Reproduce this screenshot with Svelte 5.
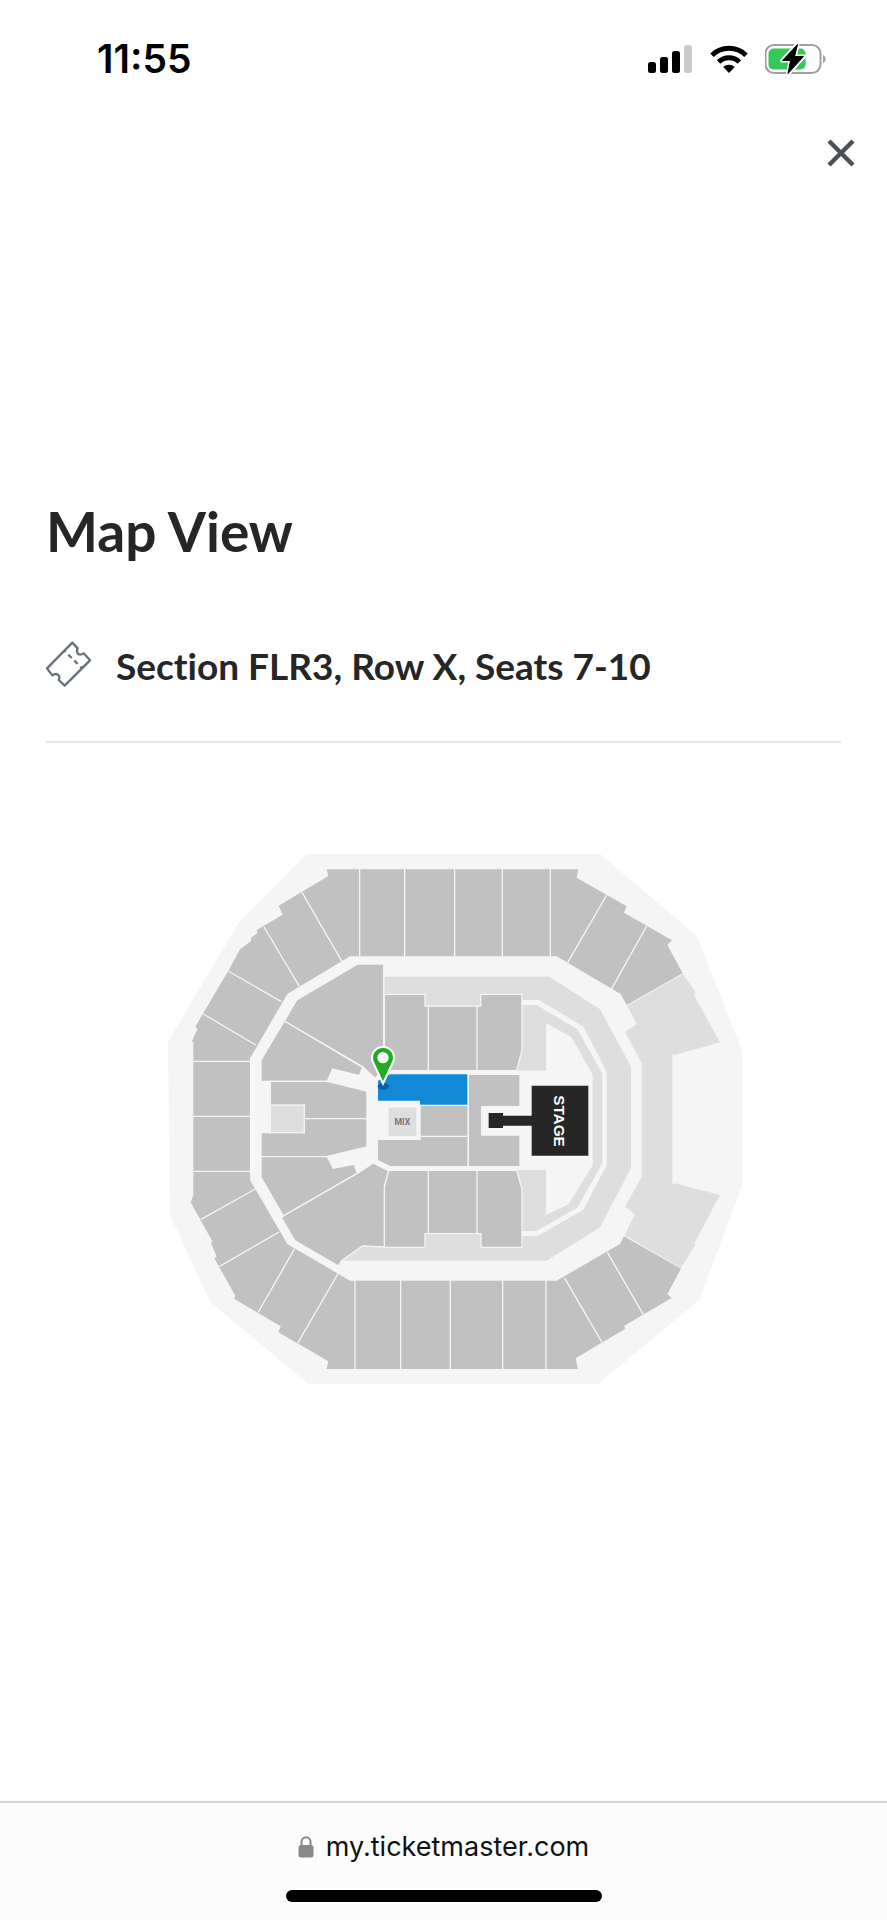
<script>
  const seat = { section: 'FLR3', row: 'X', seats: '7-10' };

  // Straight lines that part the blocks of the outer ring
  const ringDividers =
    'M599 70V337M734 70V337M884 70V337M1027 70V337M1171 70V337' +
    'M585 1304V1575M722 1304V1575M871 1304V1575M1028 1304V1575M1158 1304V1575' +
    'M426 142L546 350M312 246L418 424M204 378L364 470M130 507L287 600' +
    'M96 649H272M96 814H272M96 979H272' +
    'M286 1032L123 1123M357 1161L179 1264M404 1211L295 1401M534 1286L413 1495' +
    'M1340 150L1223 353M1460 243L1354 433M1213 1298L1326 1492M1342 1222L1450 1409';
</script>

<div class="screen">
  <header class="status">
    <time class="clock">11:55</time>
    <div class="indicators">
      <svg width="45" height="30" viewBox="0 0 45 30" aria-hidden="true">
        <rect x="0" y="18" width="8" height="11" rx="2.5" />
        <rect x="12" y="13" width="8" height="16" rx="2.5" />
        <rect x="24" y="7" width="8" height="22" rx="2.5" />
        <rect x="36" y="1" width="8" height="28" rx="2.5" fill="#cbcbcb" />
      </svg>
      <svg width="38" height="30" viewBox="0 0 38 30" aria-hidden="true">
        <g fill="none" stroke="#000" stroke-width="5">
          <path d="M2 11.2a24.5 24.5 0 0 1 34 0" />
          <path d="M8.6 18a15 15 0 0 1 20.8 0" />
        </g>
        <path d="M13.2 23a8.4 8.4 0 0 1 11.6 0L19 29z" />
      </svg>
      <svg width="64" height="32" viewBox="1 0 64 32" aria-hidden="true">
        <rect x="1.5" y="2" width="55" height="28" rx="8.5" fill="none" stroke="#a0a0a0" stroke-width="2" />
        <path d="M59.500 12.500a4.500 4.500 0 0 1 0 7z" fill="#a0a0a0" stroke="#a0a0a0" />
        <rect x="4.500" y="5.500" width="37" height="21" rx="5" fill="#34c759" />
        <path d="M33.500 1L18 17.500h8.500L24 31l16-17.500h-9z" stroke="#fff" stroke-width="4" stroke-linejoin="round" />
        <path d="M33.500 1.500L18.500 17.500h8L24 30.500l15.500-17h-9z" stroke="#000" stroke-linejoin="round" />
      </svg>
    </div>
  </header>

  <div class="toolbar">
    <button class="close" type="button" aria-label="Close">
      <svg width="28" height="28" viewBox="0 0 28 28" aria-hidden="true">
        <path d="M2 2L26 26M26 2L2 26" fill="none" stroke="#4a4f59" stroke-width="4.500" />
      </svg>
    </button>
  </div>

  <main>
    <h1>Map View</h1>
    <div class="seat">
      <svg width="46" height="48" viewBox="48 450 138 144" aria-hidden="true">
        <g fill="none" stroke="#69727b" stroke-width="7" stroke-linejoin="round">
          <path d="M127 458L143 475Q138 484 144 491Q151 497 161 490L180 511L104 587L86 570Q91 560 84 554Q76 549 67 556L51 535Z" />
          <path d="M103 482L107 486M115 494L125 504M133 512L143 522M151 530L155 534" />
        </g>
      </svg>
      <p>Section {seat.section}, Row {seat.row}, Seats {seat.seats}</p>
    </div>

    <svg class="map" viewBox="-342 24 2385 1596" role="img" aria-label="Seat map">
      <path
        class="floor"
        d="M440 27H1320L1610 272L1747 620V1018L1618 1365L1313 1617H445L150 1370L30 1110L24 590L235 235Z"
      />

      <!-- outer ring -->
      <path
        class="open"
        d="M500 73H1255L1250 98L1400 184L1392 203L1536 286L1522 300L1568 385L1400 480L1382 447L1190 334H570L382 447L270 640V1005L382 1197L570 1307H1190L1380 1197L1392 1174L1563 1271L1522 1347L1535 1359L1393 1442L1395 1452L1247 1540L1254 1572H500L505 1549L355 1462L362 1444L222 1361L226 1352L163 1240L170 1235L153 1193L158 1190L92 1072L100 1050V590H95L113 551L106 545L205 377L240 313L273 288V278L292 265L290 255L368 209L356 182L505 93Z"
      />
      <path
        class="closed"
        d="M1569 388L1606 440L1602 450L1680 592L1545 630L1537 626V1019L1545 1015L1680 1050L1603 1195L1606 1200L1563 1269L1394 1171L1425 1107L1395 1085L1445 995V655L1395 560L1430 538L1402 482Z"
      />
      <path class="divider" d={ringDividers} />

      <!-- inner ring -->
      <path class="closed" d="M673 395H1168L1320 493L1413 665V970L1320 1147L1160 1247H545L607 1200H673Z" />
      <path class="floor" d="M1080 465H1137L1270 545L1340 680V960L1270 1094L1133 1173H1080Z" />
      <path class="closed" d="M1080 480H1130L1252 553L1327 686V955L1252 1088L1130 1158H1080Z" />
      <path class="floor" d="M1158 535L1234 576L1298 690V960L1226 1078L1158 1110V975H600V677H1158Z" />

      <!-- lower bowl -->
      <g class="open outlined">
        <path d="M673 448H795V483H962V448H1086V615L1070 677H673Z" />
        <path d="M686 976H1070L1086 1033V1207H963V1166H795V1207H673V1023Z" />
        <path d="M805 483V677M951 483V677M805 976V1166M951 976V1166" />
        <path d="M593 357H671V677L645 700L608 665L373 528L410 465Z" />
        <path d="M373 528L608 667L598 692L518 672L502 709H303V645Z" />
        <path d="M331 709H502L621 738V906L500 935H303V863H331Z" />
        <path d="M432 821H621" />
        <path d="M303 935H502L520 970L583 957L592 985L370 1113L303 997Z" />
        <path d="M592 985L640 954L686 978L673 1023V1206L607 1203L545 1247L535 1263L404 1187L365 1120L370 1113Z" />
      </g>
      <rect class="closed outlined" x="331" y="780" width="102" height="83" />

      <!-- general floor -->
      <path class="open" d="M927 690H1078V783H963V872H1078V963H927Z" />
      <path class="open" d="M782 783H922V872H782ZM782 876H922V963H690L654 945V885H782Z" />
      <rect class="closed" x="686" y="788" width="83" height="85" />
      <path fill="#1289d7" d="M654 707L690 688H922V779H780V767H654Z" />
      <text class="mix" x="727" y="840">MIX</text>

      <!-- stage with its runway -->
      <path fill="#262626" d="M1115 722H1285V932H1115V842H1029V849H986V804H1029V812H1115Z" />
      <text class="stage" transform="translate(1181 828) rotate(90)">STAGE</text>

      <!-- marker -->
      <ellipse cx="670" cy="724" rx="17" ry="10" fill="#0b5fa6" />
      <path
        d="M669 716L642 658C626 630 645 606 669 606S712 630 696 658Z"
        fill="#1fab23"
        stroke="#fff"
        stroke-width="6"
      />
      <circle cx="669" cy="638" r="17" fill="#fff" />
    </svg>
  </main>

  <footer>
    <a class="address" href="https://my.ticketmaster.com">
      <svg width="16" height="22" viewBox="0 0 16 22" aria-hidden="true">
        <path d="M3.500 10V6a4.500 4.800 0 0 1 9 0v4" fill="none" stroke="#88888d" stroke-width="2" />
        <rect x="0.500" y="9" width="15" height="12.500" rx="2.500" fill="#88888d" />
      </svg>
      <span>my.ticketmaster.com</span>
    </a>
    <div class="home"></div>
  </footer>
</div>

<style>
  :global(body) {
    margin: 0;
    background: #fff;
  }

  .screen {
    display: flex;
    flex-direction: column;
    min-height: 100vh;
    color: #262626;
    font-family: Lato, 'Open Sans', sans-serif;
    font-variant-ligatures: none;
  }

  .status {
    display: flex;
    align-items: center;
    justify-content: space-between;
    height: 118px;
    padding: 0 58px 0 97px;
  }

  .clock {
    color: #000;
    font: 600 39px/40px Inter, sans-serif;
  }

  .indicators {
    display: flex;
    align-items: center;
    gap: 17px;
  }

  .toolbar {
    display: flex;
    justify-content: flex-end;
    padding: 0 22px;
  }

  .close {
    display: flex;
    align-items: center;
    justify-content: center;
    width: 48px;
    height: 70px;
    padding: 0;
    border: 0;
    background: none;
  }

  main {
    flex: 1;
    padding: 311px 46px 0;
  }

  h1 {
    margin: 0;
    font-size: 55px;
    font-weight: 700;
    line-height: 64px;
  }

  .seat {
    display: flex;
    align-items: flex-start;
    gap: 24px;
    margin-top: 40px;
    padding: 37px 0 50px;
    border-bottom: 2px solid #e5e5e5;
  }

  .seat p {
    margin: 0;
    font-size: 37px;
    font-weight: 700;
    line-height: 51px;
  }

  .map {
    display: block;
    width: 100%;
    margin-top: 110px;
  }

  .floor {
    fill: #f5f5f5;
  }

  .open {
    fill: #c1c1c1;
  }

  .closed {
    fill: #dedede;
  }

  .divider,
  .outlined {
    stroke: #f5f5f5;
    stroke-width: 4;
  }

  .mix,
  .stage {
    font-weight: 700;
    text-anchor: middle;
  }

  .mix {
    fill: #777;
    font-family: Roboto, sans-serif;
    font-size: 26px;
  }

  .stage {
    fill: #fff;
    font-family: 'Liberation Sans', Arial, sans-serif;
    font-size: 46px;
  }

  footer {
    display: flex;
    flex-direction: column;
    align-items: center;
    justify-content: space-between;
    height: 99px;
    padding: 0 0 18px;
    border-top: 2px solid #d2d2d4;
    background: #fcfcfd;
    box-sizing: content-box;
  }

  .address {
    display: flex;
    align-items: center;
    gap: 12px;
    padding-top: 24px;
    color: #111;
    font: 400 27px/40px Inter, sans-serif;
    text-decoration: none;
  }

  .home {
    width: 316px;
    height: 12px;
    border-radius: 6px;
    background: #000;
  }
</style>
